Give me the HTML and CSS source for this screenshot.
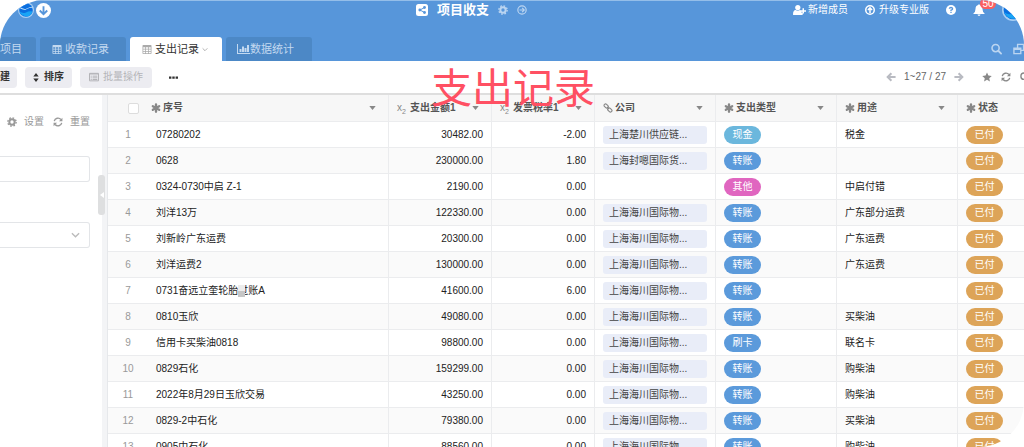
FILE: index.html
```
<!DOCTYPE html>
<html lang="zh-CN">
<head>
<meta charset="utf-8">
<title>项目收支</title>
<link rel="stylesheet" href="styles.css">
</head>
<body>
<svg class="sprite" aria-hidden="true">
  <symbol id="grid" viewBox="0 0 12 12"><path fill="currentColor" fill-rule="evenodd" d="M1 0h10q1 0 1 1v10q0 1-1 1H1q-1 0-1-1V1q0-1 1-1zM1 3v2h2.600V3zm3.600 0v2h2.800V3zm3.800 0v2H11V3zM1 6v2h2.600V6zm3.600 0v2h2.800V6zm3.800 0v2H11V6zM1 9v2h2.600V9zm3.600 0v2h2.800V9zm3.800 0v2H11V9z"/></symbol>
  <symbol id="chart" viewBox="0 0 13 12"><path fill="currentColor" d="M0 1h1v9h12v1H0zM2.500 6h2v3h-2zM5 3.500h2V9H5zM7.500 5h2v4h-2zM10 2h2v7h-2z"/></symbol>
  <symbol id="star6" viewBox="0 0 12 12"><path stroke="currentColor" stroke-width="2.800" stroke-linecap="round" d="M6 1.600v8.800M2.200 3.800l7.600 4.400M9.800 3.800L2.200 8.200"/></symbol>
  <symbol id="caret" viewBox="0 0 8 5"><path fill="currentColor" d="M0 0h8L4 5z"/></symbol>
  <symbol id="chev" viewBox="0 0 10 6"><path fill="none" stroke="currentColor" stroke-width="1.500" d="M1 1l4 4 4-4"/></symbol>
  <symbol id="gear" viewBox="0 0 12 12"><circle cx="6" cy="6" r="3.200" fill="none" stroke="currentColor" stroke-width="2.400"/><circle cx="6" cy="6" r="5" fill="none" stroke="currentColor" stroke-width="1.600" stroke-dasharray="2 1.927"/></symbol>
  <symbol id="refresh" viewBox="0 0 12 12"><path fill="none" stroke="currentColor" stroke-width="1.600" d="M1.500 5A4.600 4.600 0 0 1 9.500 3M10.500 7A4.600 4.600 0 0 1 2.500 9"/><path fill="currentColor" d="M11.300.800V5H7.100zM.700 11.200V7h4.200z"/></symbol>
  <symbol id="search" viewBox="0 0 12 12"><circle cx="5" cy="5" r="3.900" fill="none" stroke="currentColor" stroke-width="1.700"/><path stroke="currentColor" stroke-width="2" stroke-linecap="round" d="M8.200 8.200L11 11"/></symbol>
  <symbol id="left" viewBox="0 0 12 12"><path fill="none" stroke="currentColor" stroke-width="2.400" d="M6.500 1.500L2 6l4.500 4.500M2 6h9.500"/></symbol>
  <symbol id="link" viewBox="0 0 12 12"><g fill="none" stroke="currentColor" stroke-width="1.400"><rect x="1" y="1.800" width="5.600" height="3.600" rx="1.700" transform="rotate(45 3.800 3.600)"/><rect x="5.400" y="6.600" width="5.600" height="3.600" rx="1.700" transform="rotate(45 8.200 8.400)"/><path d="M4.800 4.800l2.400 2.400"/></g></symbol>
  <symbol id="globe" viewBox="0 0 20 20"><circle cx="10" cy="10" r="10" fill="#a9cff3"/><circle cx="10" cy="10" r="8.500" fill="#0b6fe0"/><path fill="#d6efff" d="M2 6q5 4 9 2t7-2l.5 1q-5 0-8 2T2 7.500z"/><path fill="#19a4f5" d="M2 12q4 3 8 1t8-1q-1 5-6 6-8 0-10-6z"/></symbol>
</svg>
<div class="app">
  <header class="header">
    <div class="topbar">
      <div class="brand">
        <svg class="globe"><use href="#globe"/></svg>
        <button class="plain" aria-label="下载"><svg class="down" viewBox="0 0 16 16"><circle cx="8" cy="8" r="8" fill="#fff"/><path fill="none" stroke="#5796da" stroke-width="2" d="M8 3.500V12M4 8l4 4 4-4"/></svg></button>
      </div>
      <div class="title">
        <svg class="i12" viewBox="0 0 12 12"><rect width="12" height="12" rx="2.500" fill="#fff"/><path stroke="#5796da" d="M8.500 3.500L4 6l4.500 2.500" fill="none"/><g fill="#5796da"><circle cx="8.500" cy="3.500" r="1.400"/><circle cx="3.800" cy="6" r="1.400"/><circle cx="8.500" cy="8.500" r="1.400"/></g></svg>
        <h1>项目收支</h1>
        <button class="plain faded" aria-label="设置"><svg class="i10"><use href="#gear"/></svg></button>
        <button class="plain faded" aria-label="进入"><svg class="i10" viewBox="0 0 12 12"><g fill="none" stroke="currentColor" stroke-width="1.400"><circle cx="6" cy="6" r="5"/><path d="M3 6h5.500M6.200 3.500L8.700 6 6.200 8.500"/></g></svg></button>
      </div>
      <div class="account">
        <a href="#" class="member"><svg class="i13" viewBox="0 0 13 12"><g fill="currentColor"><circle cx="4.800" cy="3.600" r="2.600"/><path d="M0 10.500q0-4.500 2.700-4.500 2.100 1.500 4.200 0 1 0 1.600.8V8.800h1.200v1.700q-.2.500-1 .5H1q-1 0-1-.5zM9.500 4.300H11v1.900h2v1.500h-2v1.900H9.500V7.700h-2V6.200h2z"/></g></svg>新增成员</a>
        <a href="#" class="upgrade"><svg class="i10" viewBox="0 0 12 12"><circle cx="6" cy="6" r="5.100" fill="none" stroke="currentColor" stroke-width="1.800"/><path fill="none" stroke="currentColor" stroke-width="1.800" d="M6 9.500V3.500M3.500 6L6 3.500 8.500 6"/></svg>升级专业版</a>
        <button class="plain" aria-label="帮助"><svg class="i10" viewBox="0 0 12 12"><circle cx="6" cy="6" r="6" fill="#fff"/><path fill="none" stroke="#5796da" stroke-width="1.600" d="M4 4.500Q4.200 3 6 3t2 1.500Q8 5.500 6 6.200v1M6 8.200v1.500"/></svg></button>
        <button class="plain bell" aria-label="通知"><svg class="i12" viewBox="0 0 12 12"><path fill="#fff" d="M5.200 1a.8.800 0 0 1 1.600 0Q9.500 1.500 9.500 5q0 3 2 4.200v.8H.5v-.8Q2.500 8 2.500 5q0-3.500 2.700-4zM4.500 10.500h3q-.2 1.400-1.500 1.400t-1.500-1.400z"/></svg><span class="badge">50</span></button>
        <svg class="avatar"><use href="#globe"/></svg>
      </div>
    </div>
    <div class="tabbar">
      <nav class="tabs">
        <a href="#" class="tab first">项目</a>
        <a href="#" class="tab"><svg class="i10"><use href="#grid"/></svg>收款记录</a>
        <a href="#" class="tab active"><svg class="i10"><use href="#grid"/></svg>支出记录<svg class="chev"><use href="#chev"/></svg></a>
        <a href="#" class="tab stats"><svg class="i13"><use href="#chart"/></svg>数据统计</a>
      </nav>
      <div class="tools">
        <button class="plain faded" aria-label="搜索"><svg class="i12"><use href="#search"/></svg></button>
        <button class="plain faded" aria-label="窗口"><svg class="i12" viewBox="0 0 12 12"><path fill="none" stroke="currentColor" stroke-width="1.500" d="M1 5h7.500v6H1zM5 4.500V1h6.500v6.500H9"/><path fill="currentColor" d="M1 5h7.500v2H1z"/></svg></button>
      </div>
    </div>
  </header>

  <div class="toolbar">
    <button class="btn create">建</button>
    <button class="btn"><svg class="sort" viewBox="0 0 6 10"><path fill="currentColor" d="M0 4l3-4 3 4zM0 6h6l-3 4z"/></svg>排序</button>
    <button class="btn" disabled><svg class="i10" viewBox="0 0 12 12"><path fill="none" stroke="currentColor" stroke-width="1.200" d="M.6 1.600h10.800v9H.6zM2 5h1.300M4.300 5H10M2 7h1.300M4.300 7H10M2 9h1.300M4.300 9H10"/><path fill="currentColor" d="M1 1.500h10V3H1z"/></svg>批量操作</button>
    <button class="plain more" aria-label="更多"><svg class="dots" viewBox="0 0 9 3"><path fill="currentColor" d="M0 .5h2.400v2.200H0zM3.300.5h2.400v2.200H3.300zM6.600.5H9v2.200H6.600z"/></svg></button>
    <div class="pager">
      <button class="plain pale" aria-label="上一页"><svg class="i10"><use href="#left"/></svg></button>
      <span>1~27 / 27</span>
      <button class="plain pale" aria-label="下一页"><svg class="i10 flip"><use href="#left"/></svg></button>
    </div>
    <div class="actions">
      <button class="plain" aria-label="收藏"><svg class="i10" viewBox="0 0 12 12"><path fill="currentColor" d="M6 .5l1.700 3.700 4 .5-3 2.700.8 4L6 9.400l-3.500 2 .8-4-3-2.700 4-.5z"/></svg></button>
      <button class="plain" aria-label="刷新"><svg class="i10"><use href="#refresh"/></svg></button>
      <button class="plain" aria-label="查找"><svg class="i10"><use href="#search"/></svg></button>
    </div>
    <div class="caption">支出记录</div>
  </div>

  <main class="body">
    <aside class="side">
      <div class="side-tools">
        <button class="plain"><svg class="i10"><use href="#gear"/></svg>设置</button>
        <button class="plain"><svg class="i10"><use href="#refresh"/></svg>重置</button>
      </div>
      <input class="field" type="text" aria-label="筛选内容">
      <div class="picker">
        <select class="field" aria-label="筛选选项"><option></option></select>
        <svg class="chev"><use href="#chev"/></svg>
      </div>
    </aside>
    <div class="gutter"><button class="handle" aria-label="收起"><svg viewBox="0 0 4 6"><path fill="#fff" d="M4 0v6L0 3z"/></svg></button></div>
    <div class="sheet">
      <table>
        <colgroup><col class="c-no"><col><col class="c-num"><col class="c-num"><col class="c-mid"><col class="c-mid"><col class="c-mid"><col class="c-state"></colgroup>
        <thead>
          <tr>
            <th><input type="checkbox" aria-label="全选"></th>
            <th class="name"><div class="head"><svg class="i10"><use href="#star6"/></svg>序号<svg class="caret"><use href="#caret"/></svg></div></th>
            <th><div class="head"><span class="x2">x<sub>2</sub></span>支出金额1<svg class="caret"><use href="#caret"/></svg></div></th>
            <th><div class="head"><span class="x2">x<sub>2</sub></span>发票税率1<svg class="caret"><use href="#caret"/></svg></div></th>
            <th><div class="head"><svg class="i10"><use href="#link"/></svg>公司<svg class="caret"><use href="#caret"/></svg></div></th>
            <th><div class="head"><svg class="i10"><use href="#star6"/></svg>支出类型<svg class="caret"><use href="#caret"/></svg></div></th>
            <th><div class="head"><svg class="i10"><use href="#star6"/></svg>用途<svg class="caret"><use href="#caret"/></svg></div></th>
            <th><div class="head"><svg class="i10"><use href="#star6"/></svg>状态</div></th>
          </tr>
        </thead>
        <tbody>
          <tr><td>1</td><td>07280202</td><td>30482.00</td><td>-2.00</td><td><span class="chip">上海楚川供应链...</span></td><td><span class="pill cash">现金</span></td><td>税金</td><td><span class="pill paid">已付</span></td></tr>
          <tr><td>2</td><td>0628</td><td>230000.00</td><td>1.80</td><td><span class="chip">上海封嗯国际货...</span></td><td><span class="pill">转账</span></td><td></td><td><span class="pill paid">已付</span></td></tr>
          <tr><td>3</td><td>0324-0730中启 Z-1</td><td>2190.00</td><td>0.00</td><td></td><td><span class="pill other">其他</span></td><td>中启付错</td><td><span class="pill paid">已付</span></td></tr>
          <tr><td>4</td><td>刘洋13万</td><td>122330.00</td><td>0.00</td><td><span class="chip">上海海川国际物...</span></td><td><span class="pill">转账</span></td><td>广东部分运费</td><td><span class="pill paid">已付</span></td></tr>
          <tr><td>5</td><td>刘新岭广东运费</td><td>20300.00</td><td>0.00</td><td><span class="chip">上海海川国际物...</span></td><td><span class="pill">转账</span></td><td>广东运费</td><td><span class="pill paid">已付</span></td></tr>
          <tr><td>6</td><td>刘洋运费2</td><td>130000.00</td><td>0.00</td><td><span class="chip">上海海川国际物...</span></td><td><span class="pill">转账</span></td><td>广东运费</td><td><span class="pill paid">已付</span></td></tr>
          <tr><td>7</td><td>0731奋远立奎轮胎<span class="masked">过</span>账A</td><td>41600.00</td><td>6.00</td><td><span class="chip">上海海川国际物...</span></td><td><span class="pill">转账</span></td><td></td><td><span class="pill paid">已付</span></td></tr>
          <tr><td>8</td><td>0810玉欣</td><td>49080.00</td><td>0.00</td><td><span class="chip">上海海川国际物...</span></td><td><span class="pill">转账</span></td><td>买柴油</td><td><span class="pill paid">已付</span></td></tr>
          <tr><td>9</td><td>信用卡买柴油0818</td><td>98800.00</td><td>0.00</td><td><span class="chip">上海海川国际物...</span></td><td><span class="pill">刷卡</span></td><td>联名卡</td><td><span class="pill paid">已付</span></td></tr>
          <tr><td>10</td><td>0829石化</td><td>159299.00</td><td>0.00</td><td><span class="chip">上海海川国际物...</span></td><td><span class="pill">转账</span></td><td>购柴油</td><td><span class="pill paid">已付</span></td></tr>
          <tr><td>11</td><td>2022年8月29日玉欣交易</td><td>43250.00</td><td>0.00</td><td><span class="chip">上海海川国际物...</span></td><td><span class="pill">转账</span></td><td>购柴油</td><td><span class="pill paid">已付</span></td></tr>
          <tr><td>12</td><td>0829-2中石化</td><td>79380.00</td><td>0.00</td><td><span class="chip">上海海川国际物...</span></td><td><span class="pill">转账</span></td><td>买柴油</td><td><span class="pill paid">已付</span></td></tr>
          <tr><td>13</td><td>0905中石化</td><td>88560.00</td><td>0.00</td><td><span class="chip">上海海川国际物...</span></td><td><span class="pill">转账</span></td><td>购柴油</td><td><span class="pill paid">已付</span></td></tr>
        </tbody>
      </table>
    </div>
  </main>
</div>
</body>
</html>
```
FILE: styles.css
```
* { box-sizing: border-box; }
body {
  margin: 0;
  background: #fff;
  color: #222;
  font: 10px/14px "Liberation Sans", "Noto Sans CJK SC", sans-serif;
  overflow: hidden;
}
svg { display: block; flex: none; }
a { color: inherit; text-decoration: none; }
.sprite { position: absolute; width: 0; height: 0; }
.i10 { width: 10px; height: 10px; }
.i12 { width: 12px; height: 12px; }
.i13 { width: 13px; height: 12px; }
.flip { transform: scaleX(-1); }
.plain {
  display: flex; align-items: center; gap: 7px;
  border: 0; padding: 0; background: none; color: inherit; font: inherit;
}
.faded { color: #bbd5f1; }
.pale { color: #b9bbc2; }

.app { display: flex; flex-direction: column; height: 100vh; border-radius: 45px; overflow: hidden; }

.header { background: #5796da; border-top: 1px solid #94bee9; color: #fff; }
.topbar { display: grid; grid-template: 18px / 415fr auto 496fr; align-items: center; }
.brand { display: flex; align-items: center; gap: 2px; padding-left: 18px; }
.globe { width: 16px; height: 16px; }
.down { width: 15px; height: 15px; }
.title { display: flex; align-items: center; gap: 9px; }
.title h1 { margin: 0; font-size: 13px; line-height: 18px; }
.account { display: flex; align-items: center; justify-content: flex-end; gap: 17px; }
.account a { display: flex; align-items: center; }
.member { gap: 2px; }
.upgrade { gap: 4px; }
.bell { position: relative; }
.badge {
  position: absolute; left: 7px; top: -6px; width: 16px; height: 11px;
  border-radius: 6px; background: #fb5f60; line-height: 11px; text-align: center;
}
.avatar { width: 22px; height: 22px; }
.tabbar { display: flex; align-items: flex-end; justify-content: space-between; padding-top: 18px; }
.tabs { display: flex; gap: 4px; }
.tab {
  display: flex; align-items: center; gap: 3px; height: 24px; padding: 0 12px;
  border-radius: 3px 3px 0 0; background: #4c88c6; color: #c3d9f0;
  font-size: 11px; line-height: 16px; width: 86px;
}
.tab .i10 { height: 9px; }
.tab.first { width: 36px; padding: 0; }
.tab.active { width: 92px; background: #fff; color: #333; }
.tab.active svg { color: #aaa; }
.tab.stats { gap: 0; padding: 0 11px; }
.chev { width: 6px; height: 5px; }
.tools { display: flex; align-items: center; height: 24px; gap: 11px; }
.tools .i12 { width: 11px; }

.toolbar {
  position: relative; z-index: 1; display: flex; align-items: center; gap: 8px; height: 34px;
  border-bottom: 2px solid #dedede; background: #fff;
}
.btn {
  display: flex; align-items: center; gap: 5px; height: 21px; padding: 0 8px;
  border: 0; border-radius: 4px; background: #ececf1; color: #333; font: inherit; font-weight: bold;
}
.btn:not(.create) { padding: 0 8px; }
.btn:disabled { gap: 4px; color: #b4b4b8; font-weight: normal; }
.btn:not(.create):not(:disabled) { padding: 0 8px; }
.create { width: 17px; padding: 0; border-radius: 0 4px 4px 0; }
.sort { width: 6px; height: 9px; }
.more { margin-left: 9px; color: #333; }
.dots { width: 9px; height: 3px; }
.pager { display: flex; align-items: center; gap: 8px; margin-left: auto; color: #666; }
.actions { display: flex; gap: 9px; margin: 0 -6px 0 10px; color: #888; }
.caption {
  position: absolute; left: 50%; top: 0; margin-left: -81px;
  color: #ff5063; font-size: 41px; line-height: 56px; white-space: nowrap;
}

.btn:not(.create) { padding: 0 9px; }

.body { display: flex; flex: 1; min-height: 0; }
.side { flex: none; width: 102px; padding: 20px 12px 0 0; }
.side-tools { display: flex; justify-content: flex-end; gap: 9px; color: #999; }
.field {
  display: block; width: 100%; height: 26px; margin: 0; border: 1px solid #e3e5e8; border-left: 0;
  border-radius: 0 3px 3px 0; background: #fff; appearance: none; outline: 0;
}
.side > .field { margin-top: 27px; }
.picker { position: relative; margin-top: 40px; }
.picker .chev { position: absolute; right: 10px; top: 10px; width: 9px; height: 6px; color: #bbb; }
.gutter { position: relative; flex: none; width: 6px; background: #f3f4f6; border-right: 1px solid #e6e8eb; }
.handle {
  position: absolute; right: 2px; top: 80px; width: 7px; height: 40px; padding: 0;
  display: flex; align-items: center; justify-content: center;
  border: 0; border-radius: 3px; background: #dedfe0;
}
.handle svg { width: 4px; height: 6px; }

.sheet { flex: 1; min-width: 0; overflow: hidden; }
table { width: 100%; table-layout: fixed; border-collapse: separate; border-spacing: 0; }
.c-no { width: 40px; }
.c-num { width: 103px; }
.c-mid { width: 121px; }
.c-state { width: 66px; }
th { height: 27px; padding: 0 12px 0 8px; background: #f7f7f7; color: #555; text-align: left; }
td { height: 26px; padding: 0 8px; white-space: nowrap; }
th, td { border-right: 1px solid #ebecee; border-bottom: 1px solid #ebecee; }
th:first-child, td:first-child,
th:last-child, td:last-child { border-right: 0; }
th.name { padding-left: 3px; }
td:first-child { padding: 0; text-align: center; color: #999; }
td:nth-child(3), td:nth-child(4) { text-align: right; }
tbody tr:nth-child(even) { background: #fafafa; }
.head { display: flex; align-items: center; gap: 2px; }
.head svg { color: #888; }
.head .caret { width: 7px; height: 4px; margin-left: auto; }
.x2 { width: 11px; color: #888; font-weight: normal; }
.x2 sub { font-size: 7px; line-height: 7px; }
input[type="checkbox"] {
  display: block; width: 11px; height: 11px; margin: 0 0 0 12px; appearance: none;
  border: 1px solid #ddd; border-radius: 2px; background: #fff;
}
.chip { display: block; height: 18px; padding: 0 6px; border-radius: 3px; background: #e9edf8; color: #444; line-height: 18px; }
.pill {
  display: block; width: 37px; height: 18px; border-radius: 9px;
  background: #5b9adb; color: #fff; line-height: 18px; text-align: center;
}
.cash { background: #6bb7dd; }
.other { background: #e066c0; }
.paid { background: #dda458; }
.masked { position: relative; }
.masked::after {
  content: ""; position: absolute; left: 0; top: 0; width: 7px; height: 12px;
  background: linear-gradient(#ececec 50%, #c6c6c6 50%);
}
```
